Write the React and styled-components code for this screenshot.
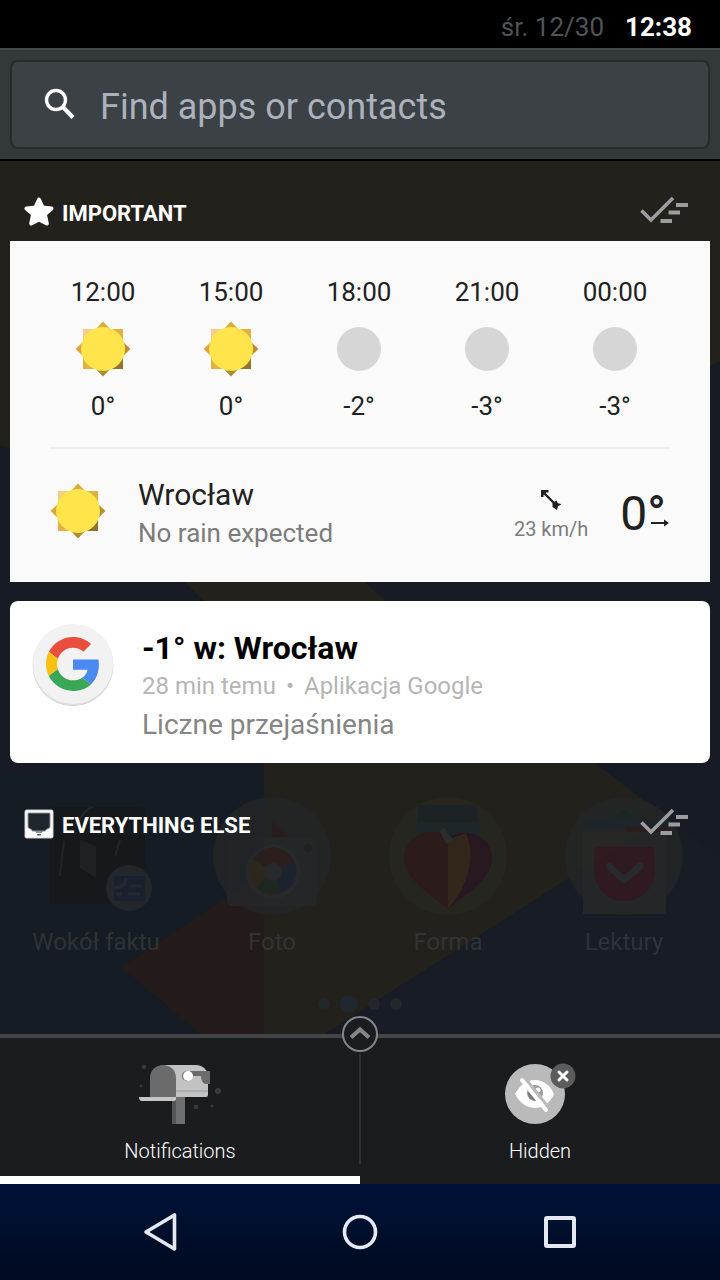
// App.jsx
import React from "react";
import styled, { createGlobalStyle } from "styled-components";

const GlobalStyle = createGlobalStyle`
  * {
    box-sizing: border-box;
  }

  body {
    margin: 0;
    background: #000;
    font-family: Roboto, "Noto Sans", sans-serif;
  }

  button {
    padding: 0;
    border: 0;
    background: none;
    font: inherit;
    color: inherit;
    cursor: pointer;
  }
`;

// Page frame
const Screen = styled.div`
  display: flex;
  flex-direction: column;
  min-height: 100vh;
`;

const StatusBar = styled.header`
  display: flex;
  align-items: center;
  justify-content: flex-end;
  gap: 21px;
  height: 48px;
  padding: 6px 28px 0 0;
  background: #000;
  font-size: 26px;
  color: #505357;
`;

const Clock = styled.time`
  font-weight: 700;
  color: #fff;
`;

// Search
const SearchBar = styled.form`
  padding: 10px;
  border-top: 2px solid #45464b;
  border-bottom: 2px solid #000;
  background: #33383b;
`;

const SearchBox = styled.label`
  display: flex;
  align-items: center;
  gap: 22px;
  height: 89px;
  padding: 0 32px;
  border: 2px solid #272b2e;
  border-radius: 8px;
  background: #3b4144;
`;

const SearchInput = styled.input`
  flex: 1;
  min-width: 0;
  padding: 4px 0 0;
  border: 0;
  outline: 0;
  background: none;
  font: inherit;
  font-size: 36px;
  color: #fff;

  &::placeholder {
    color: #adb1bd;
    opacity: 1;
  }
`;

// Notification area
const Panel = styled.main`
  position: relative;
  flex: 1;
  overflow: hidden;
  background: #171c23;
`;

const HomeScreen = styled.div`
  position: absolute;
  inset: 0;
  display: flex;
  flex-direction: column;
  justify-content: flex-end;
`;

const Wallpaper = styled.svg`
  position: absolute;
  inset: 0;
  width: 100%;
  height: 100%;
`;

const AppGrid = styled.div`
  position: relative;
  display: grid;
  grid-template-columns: repeat(4, 1fr);
  padding: 0 8px;
  opacity: 0.8;
`;

const AppShortcut = styled.div`
  display: flex;
  flex-direction: column;
  align-items: center;
  gap: 10px;
  font-size: 24px;
  line-height: 32px;
  color: #36383a;
`;

const PageDots = styled.div`
  position: relative;
  display: flex;
  align-items: center;
  justify-content: center;
  gap: 10px;
  margin: 37px 0 21px;
`;

const PageDot = styled.span`
  width: ${({ $active }) => ($active ? 18 : 12)}px;
  height: ${({ $active }) => ($active ? 18 : 12)}px;
  border-radius: 50%;
  background: ${({ $active }) => ($active ? "#20272f" : "#23272b")};
`;

const Feed = styled.div`
  position: relative;
  display: flex;
  flex-direction: column;
  gap: 19px;
  padding: 9px 10px 0;
`;

const Section = styled.section`
  display: flex;
  flex-direction: column;
`;

const SectionHeader = styled.div`
  display: flex;
  align-items: center;
  gap: 8px;
  height: 71px;
  padding: 13px 22px 0 14px;
`;

const SectionTitle = styled.h2`
  flex: 1;
  margin: 0;
  padding-top: 2px;
  font-size: 22px;
  font-weight: 700;
  color: #fff;
`;

const ClearButton = styled.button`
  display: flex;
`;

const CardList = styled.div`
  display: flex;
  flex-direction: column;
  gap: 19px;
`;

// Weather
const WeatherCard = styled.article`
  padding: 35px 0 31px;
  background: #fafafa;
  color: #212121;
`;

const Hours = styled.ul`
  display: grid;
  grid-template-columns: repeat(5, 1fr);
  margin: 0;
  padding: 0 31px 0 29px;
  list-style: none;
`;

const Hour = styled.li`
  display: flex;
  flex-direction: column;
  align-items: center;
  gap: 13px;
  font-size: 26px;
  line-height: 32px;
`;

const Current = styled.div`
  display: flex;
  align-items: center;
  margin: 25px 40px 0;
  padding-top: 22px;
  border-top: 2px solid #eee;
`;

const Place = styled.div`
  flex: 1;
  margin-left: 32px;
  padding-top: 4px;
`;

const City = styled.h3`
  margin: 0;
  font-size: 30px;
  font-weight: 400;
  line-height: 40px;
`;

const Forecast = styled.p`
  margin: 0;
  font-size: 26px;
  line-height: 36px;
  color: #7c7c7c;
`;

const Wind = styled.div`
  display: flex;
  flex-direction: column;
  align-items: center;
  gap: 6px;
  margin-right: 32px;
  padding-top: 8px;
  font-size: 20px;
  line-height: 24px;
  color: #7c7c7c;
`;

const Temperature = styled.div`
  position: relative;
  padding: 6px 4px 0 0;
  font-size: 48px;
  line-height: 56px;
`;

const Degree = styled.span`
  font-weight: 700;
`;

const Trend = styled.svg`
  position: absolute;
  right: 1px;
  bottom: 15px;
`;

// Message
const MessageCard = styled.article`
  display: flex;
  align-items: flex-start;
  gap: 28px;
  padding: 22px 22px 17px;
  border-radius: 8px;
  background: #fff;
`;

const MessageTitle = styled.h3`
  margin: 5px 0 0;
  font-size: 32px;
  font-weight: 700;
  line-height: 40px;
  color: #000;
`;

const MessageMeta = styled.p`
  display: flex;
  gap: 10px;
  margin: 0;
  font-size: 24px;
  line-height: 36px;
  color: #b5b5b5;
`;

const MessageText = styled.p`
  margin: 0;
  font-size: 28px;
  line-height: 42px;
  color: #858585;
`;

// Tabs
const Tabs = styled.nav`
  position: relative;
  display: grid;
  grid-template-columns: 1fr 1fr;
  border-top: 4px solid #434448;
  background: #1b1c1e;
`;

const Tab = styled.button`
  display: flex;
  flex-direction: column;
  align-items: center;
  gap: 12px;
  padding: 24px 0 12px;
  border-bottom: 8px solid ${({ $active }) => ($active ? "#fff" : "transparent")};
  font-size: 20px;
  font-weight: 300;
  line-height: 26px;
  color: #fff;
`;

const TabDivider = styled.span`
  position: absolute;
  top: 16px;
  bottom: 20px;
  left: 50%;
  width: 2px;
  margin-left: -1px;
  background: #303134;
`;

const Expand = styled.button`
  position: absolute;
  top: -22px;
  left: 50%;
  display: flex;
  transform: translateX(-50%);
`;

// System navigation
const SystemNav = styled.nav`
  display: grid;
  grid-template-columns: repeat(3, 1fr);
  height: 96px;
  padding: 0 60px;
  background: linear-gradient(#001139, #000f2b 50%, #000a20);
`;

const NavButton = styled.button`
  display: flex;
  align-items: center;
  justify-content: center;
`;

const SearchIcon = () => (
  <svg width="34" height="34" viewBox="0 0 34 34" fill="none" stroke="#fff" aria-hidden="true">
    <circle cx="12" cy="12" r="9.500" strokeWidth="3.4" />
    <path d="M18.500 18.500 L29 29.500" strokeWidth="4.2" />
  </svg>
);

const StarIcon = () => (
  <svg width="30" height="30" viewBox="0 0 30 30" aria-hidden="true">
    <path
      d="M15 2.500 L18.600 10.500 L27.500 11.400 L20.900 17.300 L22.800 26.500 L15 22.500 L7.200 26.500 L9.100 17.300 L2.500 11.400 L11.400 10.500 Z"
      fill="#fff"
      stroke="#fff"
      strokeWidth="4"
      strokeLinejoin="round"
    />
  </svg>
);

const InboxIcon = () => (
  <svg width="30" height="30" viewBox="0 0 30 30" aria-hidden="true">
    <rect x="1" y="1" width="28" height="28" rx="1.500" fill="#fff" stroke="#c9ccd0" />
    <path d="M4 4 H26 V18.500 L21.500 21 V22 H8 V21 L4 18.500 Z" fill="#20262d" stroke="#8b9096" />
    <path d="M11 22 H19 L17.500 24 H12.500 Z" fill="#8b9096" />
    <path d="M13 25 H17 L16.500 26.500 H13.500 Z" fill="#4c5157" />
  </svg>
);

const ClearAllIcon = () => (
  <svg width="48" height="32" viewBox="0 0 48 32" aria-hidden="true">
    <path d="M1.500 14.500 L11 24 L33 2" fill="none" stroke="#9b9d9f" strokeWidth="3.6" />
    <path d="M36 7 H48 V11 H36 Z M28.500 14.500 H40 V18.500 H28.500 Z M20.500 23 H32 V27 H20.500 Z" fill="#9b9d9f" />
  </svg>
);

const SunIcon = () => (
  <svg width="56" height="56" viewBox="0 0 56 56" aria-hidden="true">
    <path d="M8 8 H28 V28 H8 Z" fill="#f3cf84" />
    <path d="M28 8 H48 V28 H28 Z" fill="#dfb13f" />
    <path d="M8 28 H28 V48 H8 Z" fill="#dfb044" />
    <path d="M28 28 H48 V48 H28 Z" fill="#8f7429" />
    <path d="M28 0.500 L37 10 H19 Z" fill="#d9ab38" />
    <path d="M0.500 28 L10 19 V37 Z" fill="#dfa53c" />
    <path d="M55.500 28 L46 19 V37 Z" fill="#b78f33" />
    <path d="M28 55.500 L37 46 H19 Z" fill="#b08b2b" />
    <circle cx="28" cy="28" r="22" fill="#ffe44c" />
  </svg>
);

const MoonIcon = () => (
  <svg width="56" height="56" viewBox="0 0 56 56" aria-hidden="true">
    <circle cx="28" cy="28" r="22" fill="#d6d6d6" />
  </svg>
);

const WindIcon = () => (
  <svg width="22" height="22" viewBox="0 0 22 22" fill="#212121" aria-hidden="true">
    <path d="M3 3 L16 16" stroke="#212121" strokeWidth="2.4" />
    <path d="M1 1 H8.500 V3.500 H6 L3.500 6 V8 H1 Z" />
    <path d="M12.500 14 L16.500 11.500 L17.500 14 L21.500 15.200 L18 17.200 L17 21 L12.500 18 Z" />
  </svg>
);

const GoogleIcon = () => (
  <svg width="82" height="84" viewBox="0 0 82 84" aria-hidden="true">
    <circle cx="41" cy="43" r="40" fill="#c4c4c4" />
    <circle cx="41" cy="42" r="40.500" fill="#dedede" />
    <circle cx="41" cy="41" r="40" fill="#f2f2f2" />
    <g transform="translate(14 14) scale(1.125)">
      <path fill="#ea4e3f" d="M24 9.500c3.540 0 6.710 1.220 9.210 3.600l6.850-6.850C35.900 2.380 30.470 0 24 0 14.620 0 6.510 5.380 2.560 13.220l7.980 6.190C12.430 13.720 17.740 9.500 24 9.500z" />
      <path fill="#4a88f2" d="M46.980 24.550c0-1.570-.15-3.090-.38-4.550H24v9.020h12.940c-.58 2.960-2.260 5.480-4.780 7.180l7.730 6c4.510-4.180 7.090-10.360 7.090-17.650z" />
      <path fill="#fbc112" d="M10.530 28.590c-.48-1.450-.76-2.990-.76-4.590s.27-3.140.76-4.590l-7.980-6.190C.920 16.460 0 20.120 0 24c0 3.880.92 7.540 2.560 10.780l7.970-6.190z" />
      <path fill="#3aa757" d="M24 48c6.480 0 11.930-2.130 15.890-5.810l-7.730-6c-2.150 1.450-4.920 2.300-8.160 2.300-6.260 0-11.570-4.220-13.470-9.910l-7.980 6.190C6.510 42.620 14.620 48 24 48z" />
    </g>
  </svg>
);

const MailboxIcon = () => (
  <svg width="84" height="64" viewBox="0 0 84 64" aria-hidden="true">
    <g fill="#38393b">
      <circle cx="6" cy="5" r="2.300" />
      <circle cx="3" cy="24" r="1.500" />
      <circle cx="80" cy="29" r="3" />
      <circle cx="58" cy="45" r="2.300" />
      <circle cx="74" cy="44" r="1.600" />
    </g>
    <path d="M34 35 H47 V62 H34 Z" fill="#6f6f6f" />
    <path d="M34 35 H38 V62 H34 Z" fill="#555" />
    <path d="M25 3 H58 C65 3 70 8 70 16 V33 Q70 35 68 35 H38 Z" fill="#c2c2c2" />
    <path d="M38 28 H70 V30 H38 Z" fill="#acacac" />
    <path d="M12 35 V16 C12 8 18 3 25 3 C32 3 38 8 38 16 V35 Z" fill="#6b6b6b" />
    <path d="M1 35 H38 V37 Q38 39 36 39 H4 Q1 39 1 35 Z" fill="#c6c6c6" />
    <circle cx="49" cy="14" r="5" fill="#5d5d5d" />
    <path d="M50 9 H72 V22 H67 Q63 20 63 14 H50 Z" fill="#6b6b6b" />
    <circle cx="50" cy="14" r="5" fill="#fff" />
  </svg>
);

const HiddenIcon = () => (
  <svg width="80" height="64" viewBox="0 0 80 64" aria-hidden="true">
    <circle cx="35" cy="32" r="30" fill="#bababa" />
    <path d="M15 32 C20 23 27 18 35 18 C43 18 50 23 54 32 C50 41 43 46 35 46 C27 46 20 41 15 32 Z" fill="#fff" />
    <circle cx="35" cy="31" r="8" fill="#9b9b9b" />
    <path d="M28 31 A7 7 0 0 0 40 36 L33 27 Z" fill="#777" />
    <circle cx="38" cy="28" r="2.500" fill="#fff" />
    <path d="M24 15 L50 47" stroke="#bababa" strokeWidth="3" />
    <path d="M22 18 L46 48" stroke="#fff" strokeWidth="4" strokeLinecap="round" />
    <circle cx="63" cy="14" r="12.500" fill="#5c5c5c" />
    <path d="M59 10 L67 18 M67 10 L59 18" stroke="#fff" strokeWidth="3" strokeLinecap="round" />
  </svg>
);

const AroundIcon = () => (
  <svg width="120" height="120" viewBox="0 0 120 120" aria-hidden="true">
    <rect x="13" y="11" width="96" height="97" rx="4" fill="#17191b" />
    <path d="M44 44 L60 50 V82 L44 72 Z" fill="#222426" />
    <path d="M28 45 L24 80 M84 44 L79 60 M57 11 C50 13 46 18 43 26" stroke="#26282a" strokeWidth="2" fill="none" />
    <circle cx="93" cy="92" r="23" fill="#272a2d" />
    <rect x="78" y="80" width="31" height="25" rx="2" fill="#1d2133" />
    <path d="M78 91 C86 93 90 88 90 82 M94 90 H105 M92 98 H104 M80 98 H86" stroke="#292c31" strokeWidth="3" fill="none" />
  </svg>
);

const PhotoIcon = () => (
  <svg width="120" height="120" viewBox="0 0 120 120" aria-hidden="true">
    <circle cx="60" cy="60" r="59" fill="#232627" />
    <path d="M60 23 L78 41 H60 Z" fill="#2a1d1f" />
    <rect x="15" y="42" width="90" height="68" rx="5" fill="#26282a" />
    <circle cx="61" cy="76" r="27" fill="#2a2c2e" />
    <path d="M61 76 L41 63 A23 23 0 0 1 82 65 Z" fill="#2e1e1e" />
    <path d="M61 76 L82 65 A23 23 0 0 1 69 97 Z" fill="#1c2431" />
    <path d="M61 76 L69 97 A23 23 0 0 1 44 91 Z" fill="#1d2a22" />
    <path d="M61 76 L44 91 A23 23 0 0 1 41 63 Z" fill="#302a1a" />
    <circle cx="61" cy="76" r="9" fill="#2a2c2e" />
    <circle cx="96" cy="52" r="4" fill="#1f2124" />
  </svg>
);

const FitnessIcon = () => (
  <svg width="120" height="120" viewBox="0 0 120 120" aria-hidden="true">
    <circle cx="60" cy="60" r="59" fill="#272823" />
    <path d="M30 9 H88 L92 42 H28 Z" fill="#1c2428" />
    <path d="M28 26 H91 V42 H28 Z" fill="#1d282e" />
    <path d="M60 42 C48 30 16 36 16 62 C16 82 42 98 60 113 Z" fill="#2d1a1a" />
    <path d="M60 113 C82 96 104 82 104 62 C104 36 72 32 60 42 Z" fill="#2a1720" />
    <path d="M60 44 L78 37 C88 60 80 90 60 113 Z" fill="#37281a" />
    <path d="M52 35 L56 31 L60 38 L67 44 L58 48 Z" fill="#2c3032" />
  </svg>
);

const ReadingIcon = () => (
  <svg width="120" height="120" viewBox="0 0 120 120" aria-hidden="true">
    <circle cx="60" cy="60" r="59" fill="#232627" />
    <path d="M50 22 Q60 8 70 22 Z" fill="#192824" />
    <path d="M20 22 H104 V34 H20 Z" fill="#1c272b" />
    <path d="M62 30 H104 V36 H62 Z" fill="#2a1e20" />
    <path d="M19 36 H102 V118 H19 Z" fill="#282929" />
    <path d="M30 56 Q30 51 35 51 H86 Q91 51 91 56 V72 C91 92 78 105 60 105 C43 105 30 92 30 72 Z" fill="#341a1f" />
    <path d="M45 70 L60 84 L76 70" fill="none" stroke="#2c2d2e" strokeWidth="7" strokeLinecap="round" strokeLinejoin="round" />
  </svg>
);

const hours = [
  { time: "12:00", temp: "0°", icon: SunIcon },
  { time: "15:00", temp: "0°", icon: SunIcon },
  { time: "18:00", temp: "-2°", icon: MoonIcon },
  { time: "21:00", temp: "-3°", icon: MoonIcon },
  { time: "00:00", temp: "-3°", icon: MoonIcon },
];

const shortcuts = [
  { name: "Wokół faktu", icon: AroundIcon },
  { name: "Foto", icon: PhotoIcon },
  { name: "Forma", icon: FitnessIcon },
  { name: "Lektury", icon: ReadingIcon },
];

const Background = () => (
  <HomeScreen>
    <Wallpaper viewBox="0 0 720 873" preserveAspectRatio="none" aria-hidden="true">
      <rect width="720" height="873" fill="#171c24" />
      <path d="M0 0 H720 V200 L360 400 L0 284 Z" fill="#23211c" />
      <path d="M169 405 L349 405 L385 440 L665 656 L325 873 H264 V500 Z" fill="#23211b" />
      <path d="M0 600 L70 610 L0 655 Z" fill="#181b24" />
      <path d="M665 656 L720 696 V873 H325 Z" fill="#171c25" />
      <path d="M0 610 L264 610 V712 L121 806 L200 873 H0 Z" fill="#161c23" />
      <path d="M264 712 V873 H200 L121 806 Z" fill="#231a1b" />
    </Wallpaper>
    <AppGrid>
      {shortcuts.map(({ name, icon: Icon }) => (
        <AppShortcut key={name}>
          <Icon />
          {name}
        </AppShortcut>
      ))}
    </AppGrid>
    <PageDots>
      <PageDot />
      <PageDot $active />
      <PageDot />
      <PageDot />
    </PageDots>
  </HomeScreen>
);

const Weather = () => (
  <WeatherCard>
    <Hours>
      {hours.map(({ time, temp, icon: Icon }) => (
        <Hour key={time}>
          <span>{time}</span>
          <Icon />
          <span>{temp}</span>
        </Hour>
      ))}
    </Hours>
    <Current>
      <SunIcon />
      <Place>
        <City>Wrocław</City>
        <Forecast>No rain expected</Forecast>
      </Place>
      <Wind>
        <WindIcon />
        23 km/h
      </Wind>
      <Temperature>
        0<Degree>°</Degree>
        <Trend width="18" height="8" viewBox="0 0 18 8" fill="#212121" aria-hidden="true">
          <path d="M0 3 H13 V0.500 L18 4 L13 7.500 V5 H0 Z" />
        </Trend>
      </Temperature>
    </Current>
  </WeatherCard>
);

const Message = () => (
  <MessageCard>
    <GoogleIcon />
    <div>
      <MessageTitle>-1° w: Wrocław</MessageTitle>
      <MessageMeta>
        <span>28 min temu</span>
        <span>•</span>
        <span>Aplikacja Google</span>
      </MessageMeta>
      <MessageText>Liczne przejaśnienia</MessageText>
    </div>
  </MessageCard>
);

// Main Component
const App = () => {
  return (
    <Screen>
      <GlobalStyle />
      <StatusBar>
        <span>śr. 12/30</span>
        <Clock>12:38</Clock>
      </StatusBar>

      <SearchBar role="search">
        <SearchBox htmlFor="search">
          <SearchIcon />
          <SearchInput id="search" type="text" placeholder="Find apps or contacts" />
        </SearchBox>
      </SearchBar>

      <Panel>
        <Background />
        <Feed>
          <Section>
            <SectionHeader>
              <StarIcon />
              <SectionTitle>IMPORTANT</SectionTitle>
              <ClearButton type="button" aria-label="Clear important">
                <ClearAllIcon />
              </ClearButton>
            </SectionHeader>
            <CardList>
              <Weather />
              <Message />
            </CardList>
          </Section>
          <Section>
            <SectionHeader>
              <InboxIcon />
              <SectionTitle>EVERYTHING ELSE</SectionTitle>
              <ClearButton type="button" aria-label="Clear everything else">
                <ClearAllIcon />
              </ClearButton>
            </SectionHeader>
          </Section>
        </Feed>
      </Panel>

      <Tabs>
        <Tab type="button" $active>
          <MailboxIcon />
          Notifications
        </Tab>
        <Tab type="button">
          <HiddenIcon />
          Hidden
        </Tab>
        <TabDivider />
        <Expand type="button" aria-label="Expand">
          <svg width="36" height="36" viewBox="0 0 36 36" fill="none" aria-hidden="true">
            <circle cx="18" cy="18" r="17" fill="#1b1c20" stroke="#85868b" strokeWidth="2" />
            <path d="M9 21.500 L18 13.500 L27 21.500" stroke="#85868b" strokeWidth="4" />
          </svg>
        </Expand>
      </Tabs>

      <SystemNav>
        <NavButton type="button" aria-label="Back">
          <svg width="36" height="40" viewBox="0 0 36 40" fill="none" stroke="#e4e8f0" aria-hidden="true">
            <path d="M32.500 3 V37 L4 20 Z" strokeWidth="3.6" strokeLinejoin="round" />
          </svg>
        </NavButton>
        <NavButton type="button" aria-label="Home">
          <svg width="36" height="36" viewBox="0 0 36 36" fill="none" stroke="#e4e8f0" aria-hidden="true">
            <circle cx="18" cy="18" r="15.500" strokeWidth="3.6" />
          </svg>
        </NavButton>
        <NavButton type="button" aria-label="Recent apps">
          <svg width="36" height="36" viewBox="0 0 36 36" fill="none" stroke="#e4e8f0" aria-hidden="true">
            <rect x="4" y="4" width="28" height="28" rx="1" strokeWidth="4" />
          </svg>
        </NavButton>
      </SystemNav>
    </Screen>
  );
};

export default App;
